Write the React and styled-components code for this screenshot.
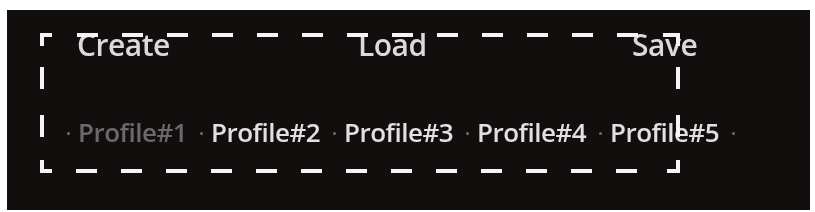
import React from "react";
import styled, { createGlobalStyle } from "styled-components";

const Global = createGlobalStyle`
  html, body { margin: 0; padding: 0; background: #ffffff; }
  body { font-family: "Open Sans", "Liberation Sans", sans-serif; }
`;

const Panel = styled.div`
  margin: 10px 5px 0 7px;
  width: 803px;
  height: 200px;
  background: #120e0d;
  padding: 23px 0 0 33px;
  box-sizing: border-box;
`;

const Frame = styled.div`
  position: relative;
  display: flow-root;
  width: 640px;
  height: 140px;
`;

const FrameLines = styled.svg`
  position: absolute;
  inset: 0;
  overflow: visible;
  pointer-events: none;
`;

const Actions = styled.div`
  display: flex;
  margin-top: -2px;
  padding-left: 37px;
  line-height: 28px;
  filter: blur(0.5px);
`;

const Action = styled.div`
  width: ${(p) => p.$w}px;
  flex: none;
  font-size: 30px;
  font-weight: 600;
  color: #dadada;
  letter-spacing: -0.5px;
`;

const Profiles = styled.div`
  display: flex;
  align-items: center;
  margin-top: 60px;
  padding-left: 27px;
  line-height: 26px;
  filter: blur(0.5px);
`;

const ProfileItem = styled.div`
  width: 133px;
  flex: none;
  display: flex;
  align-items: center;
  gap: 8px;
`;

const Dot = styled.span`
  width: 3px;
  height: 3px;
  border-radius: 50%;
  background: #6e6e6e;
  flex: none;
  margin-top: 2px;
`;

const ProfileName = styled.span`
  font-size: 26px;
  font-weight: 600;
  letter-spacing: -0.5px;
  color: ${(p) => (p.$dim ? "#6a6a6a" : "#e0e0e0")};
`;

const W = 640;
const H = 140;
const T = 4;

function frameRects() {
  const r = [];
  // corners
  r.push([0, 0, 12, T], [0, 0, T, 13]);
  r.push([W - 17, 0, 17, T], [W - T, 0, T, 13]);
  r.push([0, H - T, 12, T], [0, H - 13, T, 13]);
  r.push([W - 13, H - T, 13, T], [W - T, H - 13, T, 13]);
  // top & bottom dashes
  for (let k = 0; k < 13; k++) {
    r.push([37 + 45 * k, 0, 21, T]);
    r.push([36 + 45 * k, H - T, 21, T]);
  }
  // side dashes
  [34, 82].forEach((y) => {
    r.push([0, y, T, 22]);
    r.push([W - T, y, T, 22]);
  });
  return r;
}

const rects = frameRects();

export default function App() {
  const profiles = ["Profile#1", "Profile#2", "Profile#3", "Profile#4", "Profile#5"];
  return (
    <>
      <Global />
      <Panel>
        <Frame>
          <Actions>
            <Action $w={281}>Create</Action>
            <Action $w={274}>Load</Action>
            <Action $w={100}>Save</Action>
          </Actions>
          <Profiles>
            {profiles.map((p, i) => (
              <ProfileItem key={p}>
                <Dot />
                <ProfileName $dim={i === 0}>{p}</ProfileName>
              </ProfileItem>
            ))}
            <Dot />
          </Profiles>
          <FrameLines width={W} height={H} viewBox={`0 0 ${W} ${H}`}>
            {rects.map(([x, y, w, h], i) => (
              <rect key={i} x={x} y={y} width={w} height={h} fill="#f4f4f4" />
            ))}
          </FrameLines>
        </Frame>
      </Panel>
    </>
  );
}
